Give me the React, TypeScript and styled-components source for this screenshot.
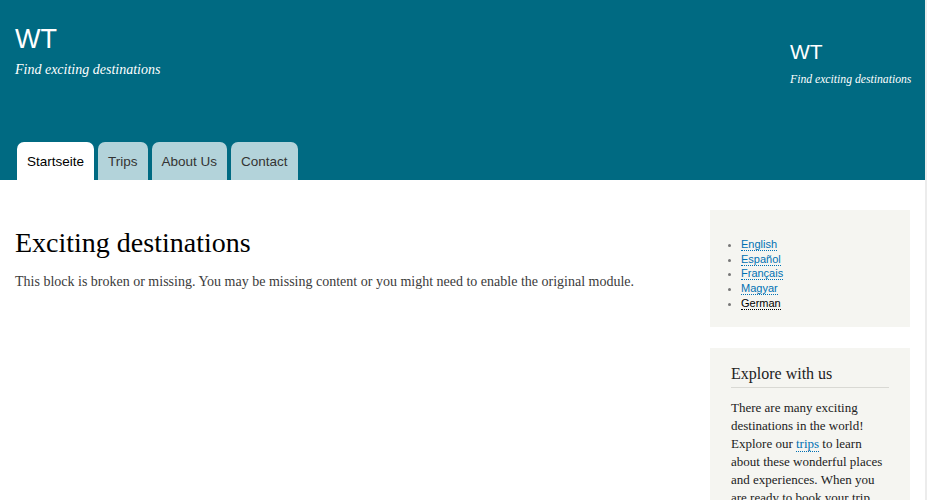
import styled, { createGlobalStyle } from 'styled-components';

const GlobalStyle = createGlobalStyle`
  html, body {
    margin: 0;
    padding: 0;
    background: #ffffff;
  }
  body {
    font-family: 'Liberation Serif', 'Times New Roman', serif;
    color: #222;
    overflow: hidden;
  }
`;

const tabs = ['Startseite', 'Trips', 'About Us', 'Contact'];

const languages = [
  { label: 'English', active: false },
  { label: 'Español', active: false },
  { label: 'Français', active: false },
  { label: 'Magyar', active: false },
  { label: 'German', active: true },
];

const App = () => {
  return (
    <Page>
      <GlobalStyle />
      <Header>
        <HeaderTop>
          <Branding>
            <SiteName>WT</SiteName>
            <Slogan>Find exciting destinations</Slogan>
          </Branding>
          <SideBranding>
            <SiteName $small>WT</SiteName>
            <Slogan $small>Find exciting destinations</Slogan>
          </SideBranding>
        </HeaderTop>
        <Tabs>
          {tabs.map((tab, i) => (
            <Tab key={tab} $active={i === 0}>
              {tab}
            </Tab>
          ))}
        </Tabs>
      </Header>
      <Body>
        <Main>
          <Title>Exciting destinations</Title>
          <Text>
            This block is broken or missing. You may be missing content or you
            might need to enable the original module.
          </Text>
        </Main>
        <Sidebar>
          <Block $compact>
            <LangList>
              {languages.map((lang) => (
                <LangItem key={lang.label}>
                  <LangLink $active={lang.active}>{lang.label}</LangLink>
                </LangItem>
              ))}
            </LangList>
          </Block>
          <Block>
            <BlockTitle>Explore with us</BlockTitle>
            <BlockText>
              There are many exciting destinations in the world! Explore our{' '}
              <TextLink>trips</TextLink> to learn about these wonderful places
              and experiences. When you are ready to book your trip, contact
              us and we will help you plan everything.
            </BlockText>
          </Block>
        </Sidebar>
      </Body>
    </Page>
  );
};

const Page = styled.div`
  width: 925px;
  height: 500px;
  border-right: 2px solid #ececec;
  overflow: hidden;
`;

const Header = styled.header`
  background: #006a82;
  height: 180px;
  display: flex;
  flex-direction: column;
  justify-content: space-between;
`;

const HeaderTop = styled.div`
  display: flex;
  justify-content: space-between;
  align-items: flex-start;
`;

const Branding = styled.div`
  padding: 24px 0 0 15px;
`;

const SideBranding = styled.div`
  padding: 40px 14px 0 0;
  width: 121px;
`;

const SiteName = styled.div<{ $small?: boolean }>`
  font-family: 'Liberation Sans', Arial, sans-serif;
  color: #ffffff;
  font-size: ${({ $small }) => ($small ? '21px' : '27px')};
  line-height: ${({ $small }) => ($small ? '24px' : '30px')};
`;

const Slogan = styled.div<{ $small?: boolean }>`
  font-family: 'Liberation Serif', 'Times New Roman', serif;
  font-style: italic;
  color: #ffffff;
  white-space: nowrap;
  font-size: ${({ $small }) => ($small ? '11.7px' : '14px')};
  margin-top: ${({ $small }) => ($small ? '9px' : '8px')};
`;

const Tabs = styled.nav`
  display: flex;
  gap: 4px;
  padding-left: 17px;
`;

const Tab = styled.a<{ $active?: boolean }>`
  display: flex;
  align-items: center;
  height: 38px;
  padding: 0 10px;
  border-radius: 7px 7px 0 0;
  background: ${({ $active }) => ($active ? '#ffffff' : '#b3d3da')};
  color: ${({ $active }) => ($active ? '#000000' : '#333333')};
  font-family: 'Liberation Sans', Arial, sans-serif;
  font-size: 13.5px;
  cursor: pointer;
`;

const Body = styled.div`
  display: flex;
  justify-content: space-between;
  padding: 30px 15px 0 15px;
`;

const Main = styled.main`
  flex: 1;
  padding-top: 18px;
`;

const Title = styled.h1`
  margin: 0;
  font-weight: normal;
  font-size: 28px;
  line-height: 30px;
  color: #000;
`;

const Text = styled.p`
  margin: 16px 0 0;
  font-size: 14px;
  color: #3b3b3b;
`;

const Sidebar = styled.aside`
  width: 200px;
  display: flex;
  flex-direction: column;
  gap: 21px;
`;

const Block = styled.section<{ $compact?: boolean }>`
  background: #f5f5f1;
  padding: ${({ $compact }) => ($compact ? '20px 21px 16px' : '16px 21px 20px')};
`;

const LangList = styled.ul`
  margin: 7px 0 0;
  padding-left: 10px;
  list-style: disc;
  color: #777;
  font-family: 'Liberation Sans', Arial, sans-serif;
  font-size: 11px;
  line-height: 14.7px;
`;

const LangItem = styled.li`
  padding-left: 0;
`;

const LangLink = styled.a<{ $active?: boolean }>`
  color: ${({ $active }) => ($active ? '#000000' : '#0071b3')};
  border-bottom: 1px dotted ${({ $active }) => ($active ? '#000000' : '#0071b3')};
  cursor: pointer;
`;

const BlockTitle = styled.h2`
  margin: 0;
  font-weight: normal;
  font-size: 16px;
  line-height: 20px;
  color: #222;
  padding-bottom: 3px;
  border-bottom: 1px solid #d9d9d4;
`;

const BlockText = styled.p`
  margin: 11px 0 0;
  font-size: 13px;
  line-height: 18px;
  color: #222;
`;

const TextLink = styled.a`
  color: #0071b3;
  border-bottom: 1px dotted #0071b3;
  cursor: pointer;
`;

export default App;
